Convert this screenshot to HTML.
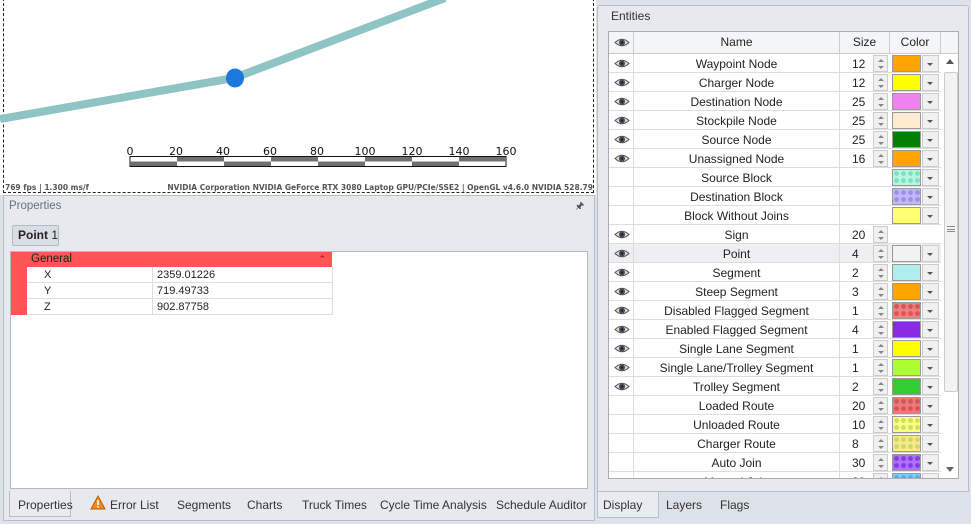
<!DOCTYPE html>
<html><head><meta charset="utf-8"><style>
*{box-sizing:border-box;margin:0;padding:0}
body{width:971px;height:524px;background:#dde1e8;font-family:"Liberation Sans",sans-serif;font-size:11px;color:#222;position:relative;overflow:hidden}
.abs{position:absolute}
.tab{position:absolute;top:493px;height:25px;line-height:24px;font-size:12px;color:#333}
.row{position:absolute;left:0;width:332px;height:19px;border-bottom:1px solid #ddd}
.cell{position:absolute;top:0;height:19px;line-height:19px;text-align:center;border-right:1px solid #ddd;font-size:12px}
.sp{position:absolute;left:264px;top:1px;width:15px;height:17px;background:#f0f0f0;border:1px solid #ccc}
.sp:before{content:"";position:absolute;left:4px;top:3px;border:3px solid transparent;border-bottom:3px solid #888;border-top:0}
.sp:after{content:"";position:absolute;left:4px;top:10px;border:3px solid transparent;border-top:3px solid #888;border-bottom:0}
.sw{position:absolute;left:283px;top:1px;width:29px;height:17px;border:1px solid #999}
.dd{position:absolute;left:313px;top:1px;width:17px;height:17px;background:#f0f0f0;border:1px solid #ccc}
.dd:after{content:"";position:absolute;left:4px;top:7px;border:3px solid transparent;border-top:3px solid #555}
</style></head><body>
<div class="abs" style="left:0;top:0;width:596px;height:195px;background:#fff"></div>
<div class="abs" style="left:3px;top:-2px;width:591px;height:195px;border:1px dashed #222"></div>
<svg class="abs" style="left:0;top:0" width="596" height="195">
<polyline points="0,119 234,78 445,-2" fill="none" stroke="#8fc4c4" stroke-width="8"/>
<ellipse cx="235" cy="78" rx="9" ry="9.5" fill="#1b78dc"/>
<rect x="130" y="156.5" width="376" height="10" fill="#fff" stroke="#111" stroke-width="1"/>
<g fill="#707070">
<rect x="177" y="157" width="47" height="4.5"/><rect x="271" y="157" width="47" height="4.5"/><rect x="365" y="157" width="47" height="4.5"/><rect x="459" y="157" width="47" height="4.5"/>
<rect x="130" y="161.5" width="47" height="4.5"/><rect x="224" y="161.5" width="47" height="4.5"/><rect x="318" y="161.5" width="47" height="4.5"/><rect x="412" y="161.5" width="47" height="4.5"/>
</g>
<g font-family="DejaVu Sans, sans-serif" font-size="11" fill="#111" text-anchor="middle">
<text x="130" y="155">0</text><text x="176" y="155">20</text><text x="223" y="155">40</text><text x="270" y="155">60</text><text x="317" y="155">80</text><text x="365" y="155">100</text><text x="412" y="155">120</text><text x="459" y="155">140</text><text x="506" y="155">160</text>
</g>
<g font-family="DejaVu Sans, sans-serif" font-size="7.5" fill="#555" font-weight="bold">
<text x="5" y="190">769 fps | 1.300 ms/f</text>
<text x="593" y="190" text-anchor="end">NVIDIA Corporation NVIDIA GeForce RTX 3080 Laptop GPU/PCIe/SSE2 | OpenGL v4.6.0 NVIDIA 528.79</text>
</g>
</svg>
<div class="abs" style="left:3px;top:195px;width:592px;height:326px;background:#e6e9ee;border:1px solid #b9bec6"></div>
<div class="abs" style="left:9px;top:200px;font-size:11.5px;color:#6a7080">Properties</div>
<div class="abs" style="left:575px;top:199px;font-size:10px;color:#555">&#128392;</div>
<div class="abs" style="left:12px;top:225px;width:47px;height:21px;background:#d9dde4;border:1px solid #b5bac2;border-radius:2px;line-height:19px;padding-left:5px;font-size:12px"><b>Point</b> 1</div>
<div class="abs" style="left:10px;top:251px;width:578px;height:238px;background:#fff;border:1px solid #b5bac2"></div>
<div class="abs" style="left:11px;top:252px;width:321px;height:15px;background:#ff5555;line-height:15px;padding-left:20px;font-size:11.5px;color:#222">General<span style="position:absolute;right:6px;top:0;font-size:9px;color:#900">&#8963;</span></div>
<div class="abs" style="left:11px;top:252px;width:16px;height:63px;background:#ff5555"></div>
<div class="abs" style="left:27px;top:267px;width:306px;height:48px;border-right:1px solid #ddd">
<div style="position:absolute;left:0;top:0;width:306px;height:16px;border-bottom:1px solid #ddd"></div>
<div style="position:absolute;left:0;top:16px;width:306px;height:16px;border-bottom:1px solid #ddd"></div>
<div style="position:absolute;left:0;top:32px;width:306px;height:16px;border-bottom:1px solid #ddd"></div>
<div style="position:absolute;left:125px;top:0;width:1px;height:48px;background:#ddd"></div>
<div style="position:absolute;left:17px;top:2px">X</div><div style="position:absolute;left:130px;top:2px">2359.01226</div>
<div style="position:absolute;left:17px;top:18px">Y</div><div style="position:absolute;left:130px;top:18px">719.49733</div>
<div style="position:absolute;left:17px;top:34px">Z</div><div style="position:absolute;left:130px;top:34px">902.87758</div>
</div>
<div class="abs" style="left:9px;top:491px;width:62px;height:26px;background:#e8ebf0;border:1px solid #b9bec6;border-top:0"></div>
<div class="tab" style="left:18px">Properties</div>
<svg class="abs" style="left:90px;top:495px" width="16" height="15"><path d="M8 1 L15 14 L1 14 Z" fill="#f08a18" stroke="#c05a00"/><rect x="7.2" y="5" width="1.6" height="5" fill="#fff"/><rect x="7.2" y="11" width="1.6" height="1.6" fill="#fff"/></svg>
<div class="tab" style="left:110px">Error List</div>
<div class="tab" style="left:177px">Segments</div>
<div class="tab" style="left:247px">Charts</div>
<div class="tab" style="left:302px">Truck Times</div>
<div class="tab" style="left:380px">Cycle Time Analysis</div>
<div class="tab" style="left:496px">Schedule Auditor</div>
<div class="abs" style="left:597px;top:5px;width:372px;height:487px;background:#e6e9ee;border:1px solid #b9bec6;border-radius:3px 3px 0 0"></div>
<div class="abs" style="left:611px;top:9px;font-size:12px;color:#333">Entities</div>
<div class="abs" style="left:608px;top:31px;width:351px;height:448px;background:#fff;border:1px solid #a8adb5;overflow:hidden">
<div style="position:absolute;left:0;top:0;width:351px;height:22px;background:#f4f5f7;border-bottom:1px solid #ccc"></div>
<div style="position:absolute;left:0;top:0;height:22px;width:25px;border-right:1px solid #ccc"></div>
<div style="position:absolute;left:25px;top:0;height:22px;width:206px;border-right:1px solid #ccc;text-align:center;line-height:21px;font-size:12px">Name</div>
<div style="position:absolute;left:231px;top:0;height:22px;width:50px;border-right:1px solid #ccc;text-align:center;line-height:21px;font-size:12px">Size</div>
<div style="position:absolute;left:281px;top:0;height:22px;width:51px;border-right:1px solid #ccc;text-align:center;line-height:21px;font-size:12px">Color</div>
<svg style="position:absolute;left:5px;top:5px" width="16" height="11"><path d="M1 5.5 Q8 -1 15 5.5 Q8 12 1 5.5Z" fill="#d8d8e0" stroke="#555"/><circle cx="8" cy="5.5" r="3" fill="#4a4a5a"/><circle cx="8" cy="5.5" r="1.2" fill="#222"/></svg>
<div id="rows" style="position:absolute;left:0;top:22px"></div>
<div style="position:absolute;left:333px;top:22px;width:18px;height:426px;background:#fff"></div>
<div style="position:absolute;left:337px;top:27px;border:4px solid transparent;border-bottom:5px solid #555;border-top:0"></div>
<div style="position:absolute;left:337px;top:435px;border:4px solid transparent;border-top:5px solid #666;border-bottom:0"></div>
<div style="position:absolute;left:335px;top:40px;width:14px;height:320px;background:#f3f3f3;border:1px solid #ccc;border-radius:2px"></div>
<div style="position:absolute;left:338px;top:194px;width:8px;height:6px;border-top:1px solid #888;border-bottom:1px solid #888"></div>
<div style="position:absolute;left:338px;top:197px;width:8px;height:1px;background:#888"></div>
</div>
<div class="abs" style="left:597px;top:492px;width:62px;height:26px;background:#e8ebf0;border:1px solid #b9bec6;border-top:0"></div>
<div class="tab" style="left:603px">Display</div>
<div class="tab" style="left:666px">Layers</div>
<div class="tab" style="left:720px">Flags</div>
<script>
var eye='<svg style="position:absolute;left:5px;top:4px" width="16" height="11"><path d="M1 5.5 Q8 -1 15 5.5 Q8 12 1 5.5Z" fill="#d8d8e0" stroke="#555"/><circle cx="8" cy="5.5" r="3" fill="#4a4a5a"/><circle cx="8" cy="5.5" r="1.2" fill="#222"/></svg>';
function pat(c,d){return 'background-color:'+c+';background-image:radial-gradient(circle,'+d+' 2.2px,transparent 2.6px);background-size:7px 7px;background-position:0 0'}
var R=[["Waypoint Node",1,12,"background:#ffa500"],["Charger Node",1,12,"background:#ffff00"],["Destination Node",1,25,"background:#ee82ee"],["Stockpile Node",1,25,"background:#ffebcd"],["Source Node",1,25,"background:#008000"],["Unassigned Node",1,16,"background:#ffa500"],
["Source Block",0,"",pat("#b4f8e0","#7fe0c0")],["Destination Block",0,"",pat("#c4b8f4","#9a90ea")],["Block Without Joins",0,"","background:#ffff70"],["Sign",1,20,null],["Point",1,4,"background:#f2f2f2"],["Segment",1,2,"background:#afeeee"],["Steep Segment",1,3,"background:#ffa500"],
["Disabled Flagged Segment",1,1,pat("#f08080","#d05858")],["Enabled Flagged Segment",1,4,"background:#8a2be2"],["Single Lane Segment",1,1,"background:#ffff00"],["Single Lane/Trolley Segment",1,1,"background:#adff2f"],["Trolley Segment",1,2,"background:#32cd32"],
["Loaded Route",0,20,pat("#f07878","#d05858")],["Unloaded Route",0,10,pat("#ffff80","#c8e070")],["Charger Route",0,8,pat("#ffe880","#c8d878")],["Auto Join",0,30,pat("#b070f8","#8040e0")],["Manual Join",0,30,pat("#80d0ff","#50b0f0")]];
var h='';R.forEach(function(r,i){var bg=r[0]=="Point"?"#eeeff1":"#fff";
h+='<div class="row" style="top:'+(i*19)+'px;background:'+bg+'">'+
'<div class="cell" style="left:0;width:25px">'+(r[1]?eye:'')+'</div>'+
'<div class="cell" style="left:25px;width:206px;padding-top:1px">'+r[0]+'</div>'+
'<div class="cell" style="left:231px;width:50px;text-align:left;padding-left:12px;padding-top:1px;border-right:0">'+r[2]+'</div>'+
(r[2]!==""?'<div class="sp"></div>':'')+
(r[3]?'<div class="sw" style="'+r[3]+'"></div><div class="dd"></div>':'')+
'</div>';});
document.getElementById('rows').innerHTML=h;
</script>
</body></html>
